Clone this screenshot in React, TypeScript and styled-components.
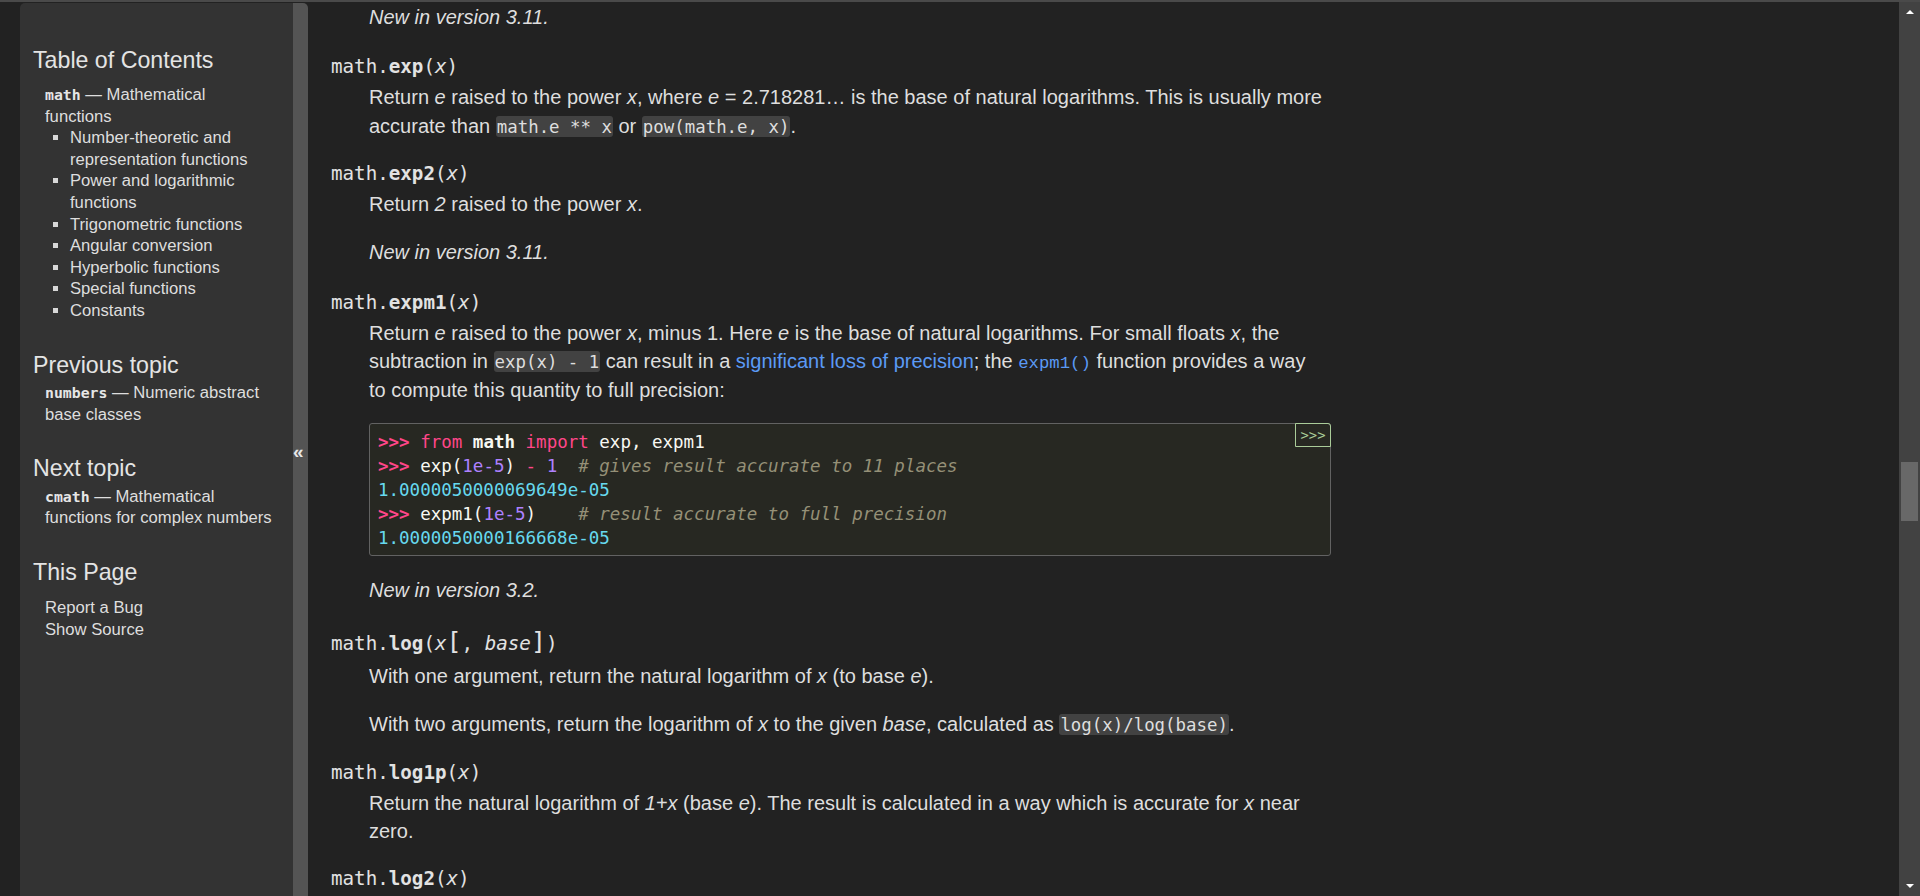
import React from "react";
import styled, { createGlobalStyle } from "styled-components";

const GlobalStyle = createGlobalStyle`
  html, body {
    margin: 0;
    padding: 0;
    background: #222222;
    overflow: hidden;
  }
  body {
    font-family: "Liberation Sans", Arial, sans-serif;
    color: #dedede;
  }
  #root { height: 896px; }
`;

const Page = styled.div`
  height: 896px;
  display: flex;
  flex-direction: column;
  background: #222222;
`;

const TopRule = styled.div`
  height: 2px;
  flex: none;
  background: #4a4a4a;
`;

const Layout = styled.div`
  flex: 1;
  min-height: 0;
  display: flex;
  padding-left: 20px;
`;

const SidebarShell = styled.div`
  flex: none;
  display: flex;
  margin-top: 1px;
  border-radius: 5px 5px 0 0;
  overflow: hidden;
`;

const Sidebar = styled.aside`
  width: 273px;
  box-sizing: border-box;
  background: #333333;
  padding: 43.3px 20px 0 13px;
  font-size: 16.65px;
  line-height: 21.6px;
  color: #dedede;
`;

const SideSection = styled.section`
  margin-bottom: 29px;
`;

const SideHeading = styled.h3<{ $gap: number }>`
  margin: 0 0 ${(p) => p.$gap}px 0;
  font-size: 23.2px;
  line-height: 28px;
  font-weight: normal;
  color: #e4e4e4;
`;

const SideCode = styled.code`
  font-family: "DejaVu Sans Mono", "Liberation Mono", monospace;
  font-weight: bold;
  font-size: 14.8px;
  line-height: 1;
  color: #e6e6e6;
`;

const TocList = styled.ul`
  list-style: none;
  margin: 0;
  padding: 0 0 0 12px;
`;

const SubList = styled.ul`
  list-style: none;
  margin: 0;
  padding: 0;
`;

const SubItem = styled.li`
  display: grid;
  grid-template-columns: 25px 1fr;
`;

const Bullet = styled.span`
  width: 5px;
  height: 5px;
  margin: 8px 0 0 8px;
  background: #d8d8d8;
`;

const SideText = styled.p`
  margin: 0;
  padding-left: 12px;
`;

const CollapseBar = styled.div`
  width: 15px;
  background: #545454;
  display: flex;
  align-items: center;
  justify-content: flex-start;
  padding-top: 5px;
  box-sizing: border-box;
  color: #e8e8e8;
  font-weight: bold;
  font-size: 19px;
`;

const Main = styled.main`
  flex: 1;
  min-width: 0;
  overflow: hidden;
  padding: 0.5px 0 0 23px;
  font-size: 20px;
  line-height: 28.3px;
`;

const Content = styled.div`
  width: 1000px;
`;

const Sig = styled.dt<{ $optional?: boolean }>`
  margin: 0 0 2px 0;
  padding: ${(p) => (p.$optional ? "2.5px 0" : "0")};
  font-family: "DejaVu Sans Mono", "Liberation Mono", monospace;
  font-size: 19.2px;
  line-height: 28px;
  color: #e2e2e2;
`;

const SigName = styled.span`
  font-weight: bold;
`;

const SigParam = styled.em`
  font-style: italic;
`;

const Optional = styled.span`
  font-size: 1.3em;
  line-height: 1;
`;

const Entry = styled.dl`
  margin: 0;
`;

const Desc = styled.dd`
  margin: 0 0 0 38px;
`;

const Para = styled.p`
  margin: 0 0 20px 0;
  padding-right: 6px;
`;

const VersionNote = styled.p`
  margin: 0 0 22.5px 0;
  font-style: italic;
`;

const Em = styled.em`
  font-style: italic;
`;

const Code = styled.code`
  font-family: "DejaVu Sans Mono", "Liberation Mono", monospace;
  font-size: 17.4px;
  line-height: 1;
  background: #424242;
  border-radius: 3px;
  padding: 1px 1px 0;
`;

const Link = styled.a`
  color: #5b9af5;
  text-decoration: none;
`;

const LinkCode = styled.code`
  font-family: "Liberation Mono", "DejaVu Sans Mono", monospace;
  font-size: 17.3px;
  line-height: 1;
`;

const PreBlock = styled.div`
  position: relative;
  margin: -1px 0 20.5px 0;
  padding: 6px 8px 5px;
  background: #272822;
  border: 1px solid #626262;
  border-radius: 3px;
  font-family: "DejaVu Sans Mono", "Liberation Mono", monospace;
  font-size: 17.5px;
  line-height: 24px;
  white-space: pre;
  color: #f8f8f2;
`;

const CodeLine = styled.div``;

const tokenColors: Record<string, string> = {
  prompt: "#ff4689",
  keyword: "#ff4689",
  op: "#ff4689",
  num: "#ae81ff",
  name: "#f8f8f2",
  ns: "#f8f8f2",
  comment: "#959077",
  out: "#66d9ef",
};

const Tok = styled.span<{ $kind: string }>`
  color: ${(p) => tokenColors[p.$kind]};
  font-weight: ${(p) => (p.$kind === "prompt" || p.$kind === "ns" ? "bold" : "normal")};
  font-style: ${(p) => (p.$kind === "comment" ? "italic" : "normal")};
`;

const CopyButton = styled.span`
  position: absolute;
  top: -1px;
  right: -1px;
  width: 36px;
  height: 24px;
  box-sizing: border-box;
  border: 1px solid #aacc99;
  border-radius: 0 3px 0 0;
  color: #aacc99;
  font-size: 13.8px;
  line-height: 20px;
  display: flex;
  align-items: center;
  justify-content: center;
`;

const ScrollBar = styled.div`
  flex: none;
  width: 21px;
  background: #424242;
  display: flex;
  flex-direction: column;
`;

const ScrollArrow = styled.div<{ $dir: "up" | "down" }>`
  height: 20px;
  flex: none;
  display: flex;
  align-items: center;
  justify-content: center;
  &::before {
    content: "";
    border-left: 4px solid transparent;
    border-right: 4px solid transparent;
    ${(p) =>
      p.$dir === "up"
        ? "border-bottom: 4px solid #ffffff;"
        : "border-top: 4px solid #ffffff;"}
  }
`;

const ScrollTrack = styled.div`
  flex: 1;
  position: relative;
`;

const ScrollThumb = styled.div`
  position: absolute;
  left: 2px;
  right: 2px;
  height: 59px;
  background: #686868;
`;

type T = [string, string];

const codeLines: T[][] = [
  [["prompt", ">>> "], ["keyword", "from"], ["name", " "], ["ns", "math"], ["name", " "], ["keyword", "import"], ["name", " exp, expm1"]],
  [["prompt", ">>> "], ["name", "exp("], ["num", "1e-5"], ["name", ") "], ["op", "-"], ["name", " "], ["num", "1"], ["name", "  "], ["comment", "# gives result accurate to 11 places"]],
  [["out", "1.0000050000069649e-05"]],
  [["prompt", ">>> "], ["name", "expm1("], ["num", "1e-5"], ["name", ")    "], ["comment", "# result accurate to full precision"]],
  [["out", "1.0000050000166668e-05"]],
];

const subTopics = [
  "Number-theoretic and representation functions",
  "Power and logarithmic functions",
  "Trigonometric functions",
  "Angular conversion",
  "Hyperbolic functions",
  "Special functions",
  "Constants",
];

const scroll = { top: 6700, height: 13000, view: 894 };

export default function App() {
  const trackLen = 854;
  const thumbLen = 59;
  const thumbTop = Math.round(
    (scroll.top / (scroll.height - scroll.view)) * (trackLen - thumbLen)
  );
  return (
    <>
      <GlobalStyle />
      <Page>
        <TopRule />
        <Layout>
          <SidebarShell>
            <Sidebar>
              <SideSection>
                <SideHeading $gap={9.8}>Table of Contents</SideHeading>
                <TocList>
                  <li>
                    <SideCode>math</SideCode> — Mathematical functions
                    <SubList>
                      {subTopics.map((t) => (
                        <SubItem key={t}>
                          <Bullet />
                          <span>{t}</span>
                        </SubItem>
                      ))}
                    </SubList>
                  </li>
                </TocList>
              </SideSection>
              <SideSection>
                <SideHeading $gap={3.6}>Previous topic</SideHeading>
                <SideText>
                  <SideCode>numbers</SideCode> — Numeric abstract base classes
                </SideText>
              </SideSection>
              <SideSection>
                <SideHeading $gap={3.1}>Next topic</SideHeading>
                <SideText>
                  <SideCode>cmath</SideCode> — Mathematical functions for complex numbers
                </SideText>
              </SideSection>
              <SideSection>
                <SideHeading $gap={11.8}>This Page</SideHeading>
                <TocList>
                  <li>Report a Bug</li>
                  <li>Show Source</li>
                </TocList>
              </SideSection>
            </Sidebar>
            <CollapseBar>«</CollapseBar>
          </SidebarShell>

          <Main>
            <Content>
              <Desc>
                <VersionNote>New in version 3.11.</VersionNote>
              </Desc>

              <Entry>
                <Sig>
                  math.<SigName>exp</SigName>(<SigParam>x</SigParam>)
                </Sig>
                <Desc>
                  <Para>
                    Return <Em>e</Em> raised to the power <Em>x</Em>, where <Em>e</Em> = 2.718281… is the
                    base of natural logarithms. This is usually more accurate than{" "}
                    <Code>math.e ** x</Code> or <Code>pow(math.e, x)</Code>.
                  </Para>
                </Desc>
              </Entry>

              <Entry>
                <Sig>
                  math.<SigName>exp2</SigName>(<SigParam>x</SigParam>)
                </Sig>
                <Desc>
                  <Para>
                    Return <Em>2</Em> raised to the power <Em>x</Em>.
                  </Para>
                  <VersionNote>New in version 3.11.</VersionNote>
                </Desc>
              </Entry>

              <Entry>
                <Sig>
                  math.<SigName>expm1</SigName>(<SigParam>x</SigParam>)
                </Sig>
                <Desc>
                  <Para>
                    Return <Em>e</Em> raised to the power <Em>x</Em>, minus 1. Here <Em>e</Em> is the base of
                    natural logarithms. For small floats <Em>x</Em>, the subtraction in{" "}
                    <Code>exp(x) - 1</Code> can result in a <Link>significant loss of precision</Link>; the{" "}
                    <Link>
                      <LinkCode>expm1()</LinkCode>
                    </Link>{" "}
                    function provides a way to compute this quantity to full precision:
                  </Para>
                  <PreBlock>
                    <CopyButton>&gt;&gt;&gt;</CopyButton>
                    {codeLines.map((line, i) => (
                      <CodeLine key={i}>
                        {line.map(([kind, text], j) => (
                          <Tok key={j} $kind={kind}>
                            {text}
                          </Tok>
                        ))}
                      </CodeLine>
                    ))}
                  </PreBlock>
                  <VersionNote>New in version 3.2.</VersionNote>
                </Desc>
              </Entry>

              <Entry>
                <Sig $optional>
                  math.<SigName>log</SigName>(<SigParam>x</SigParam>
                  <Optional>[</Optional>, <SigParam>base</SigParam>
                  <Optional>]</Optional>)
                </Sig>
                <Desc>
                  <Para>
                    With one argument, return the natural logarithm of <Em>x</Em> (to base <Em>e</Em>).
                  </Para>
                  <Para>
                    With two arguments, return the logarithm of <Em>x</Em> to the given <Em>base</Em>,
                    calculated as <Code>log(x)/log(base)</Code>.
                  </Para>
                </Desc>
              </Entry>

              <Entry>
                <Sig>
                  math.<SigName>log1p</SigName>(<SigParam>x</SigParam>)
                </Sig>
                <Desc>
                  <Para>
                    Return the natural logarithm of <Em>1+x</Em> (base <Em>e</Em>). The result is calculated
                    in a way which is accurate for <Em>x</Em> near zero.
                  </Para>
                </Desc>
              </Entry>

              <Entry>
                <Sig>
                  math.<SigName>log2</SigName>(<SigParam>x</SigParam>)
                </Sig>
              </Entry>
            </Content>
          </Main>

          <ScrollBar>
            <ScrollArrow $dir="up" />
            <ScrollTrack>
              <ScrollThumb style={{ top: thumbTop }} />
            </ScrollTrack>
            <ScrollArrow $dir="down" />
          </ScrollBar>
        </Layout>
      </Page>
    </>
  );
}
